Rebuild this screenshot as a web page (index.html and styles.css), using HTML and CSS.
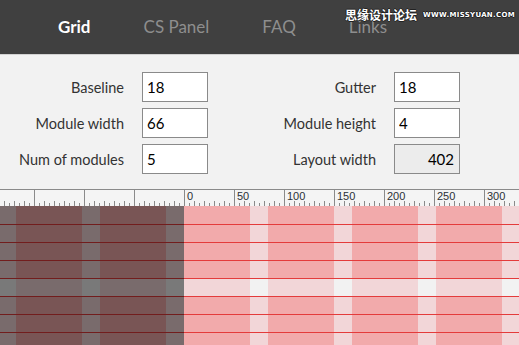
FILE: index.html
```html
<!DOCTYPE html>
<html lang="en">
<head>
  <meta charset="UTF-8">
  <meta name="viewport" content="width=device-width, initial-scale=1.0">
  <title>Grid Calculator</title>
  <link rel="stylesheet" href="styles.css">
</head>
<body>

<header class="topbar">
  <nav class="nav">
    <a class="nav-item active" href="#">Grid</a>
    <a class="nav-item" href="#">CS Panel</a>
    <a class="nav-item" href="#">FAQ</a>
    <a class="nav-item" href="#">Links</a>
  </nav>
  <div class="watermark">
    <span class="wm-cn">思缘设计论坛</span>
    <span class="wm-url">WWW.MISSYUAN.COM</span>
  </div>
</header>

<form class="settings">
  <label class="field-label" for="baseline">Baseline</label>
  <input class="field" type="text" id="baseline" value="18">
  <label class="field-label" for="gutter">Gutter</label>
  <input class="field" type="text" id="gutter" value="18">

  <label class="field-label" for="mod-width">Module width</label>
  <input class="field" type="text" id="mod-width" value="66">
  <label class="field-label" for="mod-height">Module height</label>
  <input class="field" type="text" id="mod-height" value="4">

  <label class="field-label" for="mod-count">Num of modules</label>
  <input class="field" type="text" id="mod-count" value="5">
  <label class="field-label" for="layout-width">Layout width</label>
  <input class="field readonly" type="text" id="layout-width" value="402" readonly>
</form>

<div class="ruler">
  <span class="mark">0</span>
  <span class="mark">50</span>
  <span class="mark">100</span>
  <span class="mark">150</span>
  <span class="mark">200</span>
  <span class="mark">250</span>
  <span class="mark">300</span>
</div>

<div class="grid">
  <div class="row top"></div>
  <div class="row"></div>
  <div class="row"></div>
  <div class="row"></div>
  <div class="row gap"></div>
  <div class="row"></div>
  <div class="row"></div>
  <div class="row"></div>
  <div class="outside"></div>
</div>

</body>
</html>
```

FILE: styles.css
```css
body {
  margin: 0;
  font-family: Lato, "Noto Sans", sans-serif;
  background: #f2f2f2;
  overflow: hidden;
}

/* top navigation */
.topbar {
  position: relative;
  height: 54px;
  background: #404040;
  border-bottom: 1px solid #d2d2d2;
}
.nav {
  display: flex;
  align-items: center;
  gap: 53px;
  height: 100%;
  padding: 0 0 2px 58px;
  box-sizing: border-box;
}
.nav-item {
  font-size: 17px;
  color: #8e8e8e;
  text-decoration: none;
}
.nav-item.active {
  color: #fff;
  font-weight: bold;
}
.watermark {
  position: absolute;
  top: 6px;
  left: 345px;
  display: flex;
  align-items: center;
  gap: 6px;
  color: #fff;
  text-shadow: 1px 0 #222, -1px 0 #222, 0 1px #222, 0 -1px #222;
}
.wm-cn {
  font-family: "Noto Sans CJK SC", sans-serif;
  font-size: 12px;
  font-weight: bold;
}
.wm-url {
  font-family: "DejaVu Sans", sans-serif;
  font-size: 7px;
  font-weight: bold;
  letter-spacing: 0.3px;
}

/* settings panel */
.settings {
  display: grid;
  grid-template-columns: 124px 66px 150px 66px;
  grid-auto-rows: 30px;
  gap: 6px 18px;
  align-items: center;
  margin: 0;
  padding: 17px 0 15px;
  border-bottom: 1px solid #8a8a8a;
}
.field-label {
  text-align: right;
  font-size: 14.5px;
  color: #333;
}
.field {
  width: 66px;
  height: 30px;
  box-sizing: border-box;
  margin: 0;
  padding: 0 5px 0 4px;
  border: 1px solid #8a8a8a;
  background: #fff;
  font-family: Lato, "Noto Sans", sans-serif;
  font-size: 15px;
  color: #000;
}
.field.readonly {
  background: #ececec;
  text-align: right;
}

/* ruler */
.ruler {
  display: flex;
  height: 16px;
  padding-left: 184px;
  background:
    linear-gradient(to right, #8a8a8a 1px, transparent 1px) 34px 0 / 50px 100% repeat-x,
    linear-gradient(to right, #8a8a8a 1px, transparent 1px) 4px 100% / 10px 5px repeat-x,
    linear-gradient(to right, #8a8a8a 1px, transparent 1px) 4px 100% / 5px 3px repeat-x,
    #f4f4f4;
}
.mark {
  flex: none;
  width: 50px;
  padding-left: 3px;
  box-sizing: border-box;
  font-family: "Liberation Sans", Arial, sans-serif;
  font-size: 11px;
  line-height: 12px;
  color: #2b3036;
}

/* baseline grid */
.grid {
  position: relative;
  height: 139px;
  overflow: hidden;
}
.row {
  height: 18px;
  box-sizing: border-box;
  border-top: 1px solid #e43b3b;
  background: linear-gradient(to right, #f2d6d8 18px, #f2aaab 18px) 166px 0 / 84px 100%;
}
.row.top {
  border-top: none;
}
.row.gap {
  background: linear-gradient(to right, #f2f2f2 18px, #f2d6d8 18px) 166px 0 / 84px 100%;
}
.outside {
  position: absolute;
  top: 0;
  left: 0;
  bottom: 0;
  width: 184px;
  background: rgba(0, 0, 0, 0.5);
}
```
